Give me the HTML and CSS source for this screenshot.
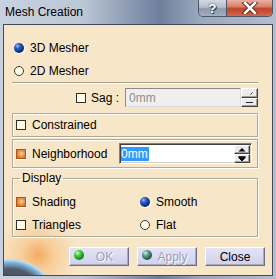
FILE: index.html
```html
<!DOCTYPE html>
<html lang="en">
<head>
    <meta charset="UTF-8">
    <meta name="viewport" content="width=device-width, initial-scale=1.0">
    <title>Mesh Creation</title>
    <link rel="stylesheet" href="styles.css">
</head>
<body>
    <div class="window">
        <div class="titlebar">
            <span class="title">Mesh Creation</span>
            <div class="caption-buttons">
                <span class="cap-btn help">?</span>
                <span class="cap-btn close">
                    <svg width="16" height="12" viewBox="0 0 16 12">
                        <path d="M3 1 L13 11 M13 1 L3 11" stroke="#4a2a26" stroke-width="4.5" stroke-linecap="square"/>
                        <path d="M3 1 L13 11 M13 1 L3 11" stroke="#fff" stroke-width="2.6" stroke-linecap="square"/>
                    </svg>
                </span>
            </div>
        </div>

        <div class="client">
            <div class="mesher">
                <div class="option"><span class="radio on"></span>3D Mesher</div>
                <div class="option"><span class="radio"></span>2D Mesher</div>
            </div>

            <div class="separator"></div>

            <div class="sag-row">
                <span class="check"></span>
                <span class="sag-label">Sag :</span>
                <div class="field disabled">0mm</div>
                <div class="spinner disabled">
                    <span class="spin-btn">
                        <svg width="15" height="8" viewBox="0 0 15 8"><path d="M8.5 5.5 L10.5 3.5" stroke="#333" stroke-width="1"/></svg>
                    </span>
                    <span class="spin-btn">
                        <svg width="15" height="7" viewBox="0 0 15 7"><path d="M4 3.5 H11" stroke="#222" stroke-width="1"/></svg>
                    </span>
                </div>
            </div>

            <div class="frame constrained">
                <div class="option"><span class="check"></span>Constrained</div>
            </div>

            <div class="frame neighborhood">
                <div class="option"><span class="check on"></span>Neighborhood</div>
                <div class="field edit">
                    <span class="selected">0mm</span>
                    <div class="spinner">
                        <span class="spin-btn">
                            <svg width="14" height="7" viewBox="0 0 14 7"><path d="M3.5 5.5 H10.5 L7 2 Z" fill="#000"/></svg>
                        </span>
                        <span class="spin-btn">
                            <svg width="14" height="7" viewBox="0 0 14 7"><path d="M3.5 1.5 H10.5 M3.5 2.5 H10.5 L7 6 Z" fill="#000" stroke="#000" stroke-width="0.8"/></svg>
                        </span>
                    </div>
                </div>
            </div>

            <fieldset class="group">
                <legend>Display</legend>
                <div class="group-grid">
                    <div class="option"><span class="check on"></span>Shading</div>
                    <div class="option"><span class="radio on"></span>Smooth</div>
                    <div class="option"><span class="check"></span>Triangles</div>
                    <div class="option"><span class="radio"></span>Flat</div>
                </div>
            </fieldset>

            <div class="actions">
                <button class="btn" disabled><span class="ball green"></span><span class="btn-text">OK</span></button>
                <button class="btn" disabled><span class="ball teal"></span><span class="btn-text">Apply</span></button>
                <button class="btn"><span class="btn-text">Close</span></button>
            </div>
        </div>
    </div>
</body>
</html>
```

FILE: styles.css
```css
* {
    box-sizing: border-box;
}

body {
    margin: 0;
    font-family: "Liberation Sans", Arial, sans-serif;
    font-size: 12px;
    color: #000;
    background-color: #a9b6ca;
}

.window {
    width: 276px;
    height: 279px;
    display: flex;
    flex-direction: column;
    padding: 0 3px 3px;
    overflow: hidden;
    background: linear-gradient(to right, #c7d1df 0%, #bcc7d6 30%, #7d8ca8 52%, #6f7f9d 58%, #9aa8bd 72%, #b3bece 100%);
}

/* title bar */
.titlebar {
    height: 24px;
    margin: 0 -3px;
    padding: 0 3px 0 5px;
    display: flex;
    align-items: flex-start;
    justify-content: space-between;
}

.title {
    padding-top: 5px;
    line-height: 14px;
    font-size: 12px;
    color: #000;
}

.caption-buttons {
    display: flex;
    height: 17px;
    border: 1px solid #4b566b;
    border-top: none;
    border-radius: 0 0 5px 5px;
    overflow: hidden;
}

.cap-btn {
    display: flex;
    align-items: center;
    justify-content: center;
    height: 100%;
}

.help {
    width: 28px;
    border-right: 1px solid #4b566b;
    background: linear-gradient(to bottom, #d3d9e3 0%, #b4bdcc 45%, #8d99ad 55%, #a3aec0 100%);
    color: #fff;
    font-weight: bold;
    font-size: 13px;
    text-shadow: 0 0 2px #2d3748, 1px 1px 0 #2d3748;
}

.close {
    width: 45px;
    background: linear-gradient(to bottom, #eab1a2 0%, #d9826b 40%, #c0432a 55%, #d2694c 100%);
}

/* client area */
.client {
    flex: 1;
    display: flex;
    flex-direction: column;
    border: 1px solid #3f4a5c;
    background:
        radial-gradient(circle at 6px 282px, #343a43 0, #4f5a68 38px, #7aaed8 44px, #b9def2 47px, rgba(247, 230, 200, 0) 49px),
        radial-gradient(circle at 34px 230px, rgba(245, 165, 85, 0.9) 0, rgba(246, 188, 120, 0.55) 16px, rgba(247, 230, 200, 0) 40px),
        #f7e6c8;
}

.option {
    display: flex;
    align-items: center;
    gap: 6px;
    white-space: nowrap;
}

.mesher {
    padding: 11px 0 0 10px;
}

.mesher .option {
    height: 23px;
}

.radio {
    width: 10px;
    height: 10px;
    border-radius: 50%;
    border: 1px solid #3a3a3a;
    background-color: #fffbe6;
    flex-shrink: 0;
}

.radio.on {
    border: none;
    background: radial-gradient(circle at 35% 30%, #9dbcf5 0, #2a5cc4 28%, #0f2f86 62%, #06164a 100%);
    box-shadow: 1px 1px 1px rgba(255, 255, 255, 0.9);
}

.check {
    width: 10px;
    height: 10px;
    border: 1px solid #2e2e2e;
    background-color: #fffbe6;
    flex-shrink: 0;
}

.check.on {
    border-color: #a85a1c;
    background: radial-gradient(circle at 55% 45%, #fbd3a6 0, #f0a060 35%, #dc7a2c 75%, #b8601e 100%);
    box-shadow: 1px 1px 0 #fff;
}

.separator {
    height: 2px;
    margin: 0 14px 0 8px;
    border-top: 1px solid #a7a08f;
    border-bottom: 1px solid #fff;
}

/* sag row */
.sag-row {
    display: flex;
    align-items: center;
    justify-content: flex-end;
    height: 19px;
    margin: 4px 14px 0 0;
}

.sag-label {
    width: 39px;
    padding-left: 5px;
}

.field {
    height: 19px;
    display: flex;
    align-items: center;
}

.field.disabled {
    width: 116px;
    padding-left: 3px;
    color: #8d8d8d;
    background-color: #efefef;
    border: 1px solid;
    border-color: #8a8a8a #dcdcdc #dcdcdc #8a8a8a;
}

.spinner {
    width: 17px;
    height: 19px;
    display: flex;
    flex-direction: column;
}

.spin-btn {
    flex: 1;
    display: flex;
    align-items: center;
    justify-content: center;
    background-color: #ebebeb;
    border: 1px solid;
    border-color: #fff #404040 #404040 #fff;
    box-shadow: inset -1px -1px 0 #a0a0a0;
}

/* frames */
.frame {
    display: flex;
    align-items: center;
    margin: 6px 14px 0 8px;
    padding-left: 3px;
    border: 1px solid #b2aa99;
    box-shadow: inset 1px 1px 0 #fff, 1px 1px 0 #fff;
}

.constrained {
    height: 24px;
}

.neighborhood {
    height: 29px;
    margin-top: 2px;
    padding-right: 5px;
}

.field.edit {
    width: 133px;
    height: 21px;
    margin-left: auto;
    background-color: #fff;
    border: 1px solid;
    border-color: #808080 #fff #fff #808080;
    box-shadow: inset 1px 1px 0 #404040, inset -1px -1px 0 #d4d0c8;
    padding: 1px;
}

.selected {
    line-height: 14px;
    padding-right: 1px;
    background-color: #3399ff;
    color: #fff;
}

.field.edit .spinner {
    width: 16px;
    height: 17px;
    margin-left: auto;
}

/* display group */
.group {
    margin: 3px 14px 0 8px;
    padding: 5px 0 0 0;
    border: 1px solid #b2aa99;
    box-shadow: inset 1px 1px 0 #fff, 1px 1px 0 #fff;
}

.group legend {
    margin-left: 7px;
    padding: 0 2px;
    line-height: 14px;
    font-size: 12px;
}

.group-grid {
    display: grid;
    grid-template-columns: 124px auto;
    grid-auto-rows: 23px;
    padding-left: 3px;
}

/* buttons */
.actions {
    display: flex;
    justify-content: flex-end;
    gap: 8px;
    margin-top: 10px;
    padding-right: 7px;
}

.btn {
    width: 60px;
    height: 19px;
    display: flex;
    align-items: center;
    padding: 0 3px;
    font: inherit;
    color: #000;
    border: 1px solid;
    border-color: #fff #6e6e88 #6e6e88 #fff;
    box-shadow: inset -1px -1px 0 #a9a9c2;
    background: linear-gradient(to bottom, #e4e4f6, #d0d0ec);
}

.btn:disabled .btn-text {
    color: #9d9db3;
    text-shadow: 1px 1px 0 #fff;
}

.btn-text {
    flex: 1;
    text-align: center;
}

.ball {
    width: 10px;
    height: 10px;
    border-radius: 50%;
    flex-shrink: 0;
    margin-left: 1px;
    margin-top: -3px;
}

.ball.green {
    background: radial-gradient(circle at 35% 30%, #c8ffc0 0, #45d040 30%, #12901a 65%, #0a4f10 100%);
}

.ball.teal {
    background: radial-gradient(circle at 35% 30%, #d0f0e4 0, #5e9e88 30%, #2b5a4e 65%, #142a26 100%);
}
```
